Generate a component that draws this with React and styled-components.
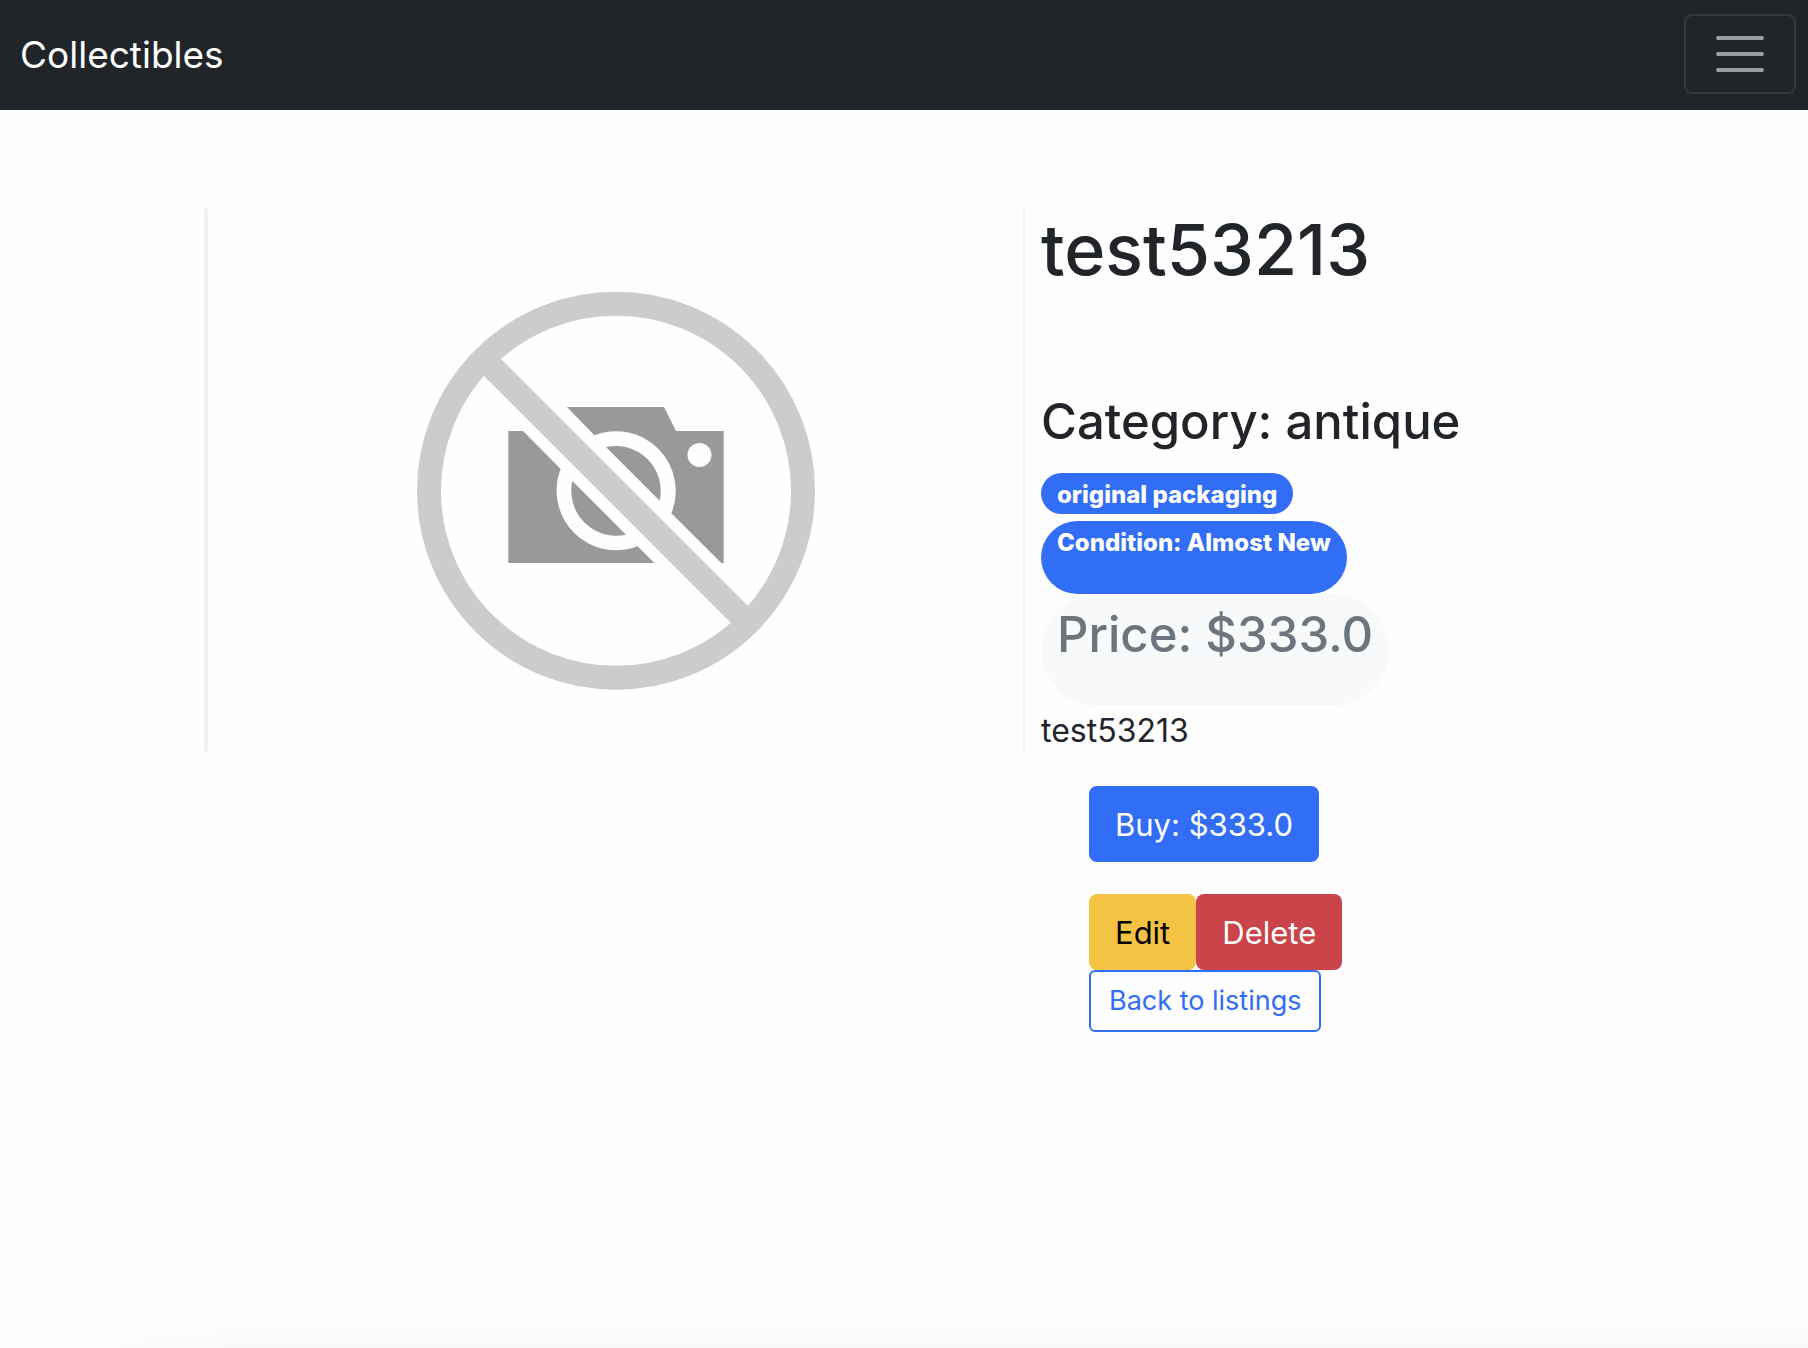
import React from "react";
import styled, { createGlobalStyle } from "styled-components";

const GlobalStyle = createGlobalStyle`
  *, *::before, *::after { box-sizing: border-box; }
  body {
    margin: 0;
    background: #fefefe;
    color: #212529;
    font-family: Inter, "Liberation Sans", sans-serif;
    font-size: 32px;
    line-height: 48px;
  }
  h1, h2, h3, p, figure { margin: 0; }
`;

const Page = styled.div`
  min-height: 100vh;
  display: flex;
  flex-direction: column;
`;

const Navbar = styled.nav`
  display: flex;
  align-items: center;
  justify-content: space-between;
  padding: 14px 12px 16px 20px;
  background: #212529;
`;

const Brand = styled.a`
  padding-top: 2px;
  color: #fff;
  font-size: 37px;
  line-height: 60px;
  text-decoration: none;
`;

const Toggler = styled.button`
  display: flex;
  align-items: center;
  justify-content: center;
  width: 112px;
  height: 80px;
  padding: 0;
  border: 2px solid #37393d;
  border-radius: 8px;
  background: transparent;
`;

const Listing = styled.main`
  display: grid;
  grid-template-columns: 821px 1fr;
  align-items: start;
  width: 100%;
  max-width: 1400px;
  margin: 0 auto;
  padding-top: 96px;
  flex: 1;
`;

const Photo = styled.figure`
  display: flex;
  justify-content: center;
  padding: 81px 0 59px;
  border: solid #fefefe;
  border-width: 4px 2px 4px 4px;
  border-left-color: #f0f0f0;
  border-right-color: #f0f0f0;
`;

const Details = styled.section`
  display: flex;
  flex-direction: column;
  align-items: flex-start;
  padding-left: 16px;
`;

const Title = styled.h1`
  font-size: 70px;
  font-weight: 500;
  line-height: 88px;
  margin-bottom: 96px;
`;

const Category = styled.h2`
  font-size: 49px;
  font-weight: 500;
  line-height: 64px;
  margin-bottom: 19px;
`;

const Badge = styled.span`
  padding: 9px 16px 7px;
  border-radius: 56px;
  background: #326df5;
  color: #fff;
  font-size: 24px;
  font-weight: 800;
  line-height: 25px;
  margin-bottom: 7px;
`;

const ConditionBadge = styled(Badge)`
  padding-bottom: 39px;
  margin-bottom: 0;
`;

const PriceBadge = styled(Badge)`
  padding: 15px 16px 45px;
  margin-bottom: 0;
  background: #f8f9fb;
  color: #6c757d;
  font-size: 49px;
  font-weight: 500;
  line-height: 52px;
`;

const Description = styled.p`
  padding: 1px 0 31px;
`;

const Actions = styled.div`
  display: flex;
  flex-direction: column;
  align-items: flex-start;
  padding-left: 48px;
`;

const ActionRow = styled.div`
  display: flex;
  margin-top: ${(p) => (p.$spaced ? "32px" : "0")};
`;

const tones = {
  primary: ["#326df5", "#fff"],
  warning: ["#f5c344", "#000"],
  danger: ["#ca444a", "#fff"],
};

const Button = styled.button`
  padding: 15px 26px 13px;
  border: 0;
  border-radius: 8px;
  background: ${(p) => tones[p.$tone][0]};
  color: ${(p) => tones[p.$tone][1]};
  font: inherit;
  font-size: 31px;
`;

const BackLink = styled.a`
  padding: 8px 18px;
  border: 2px solid #326df5;
  border-radius: 6px;
  color: #326df5;
  font-size: 27px;
  line-height: 42px;
  text-decoration: none;
`;

const BottomShade = styled.div`
  height: 28px;
  background: linear-gradient(to bottom, transparent, rgba(0, 0, 0, 0.025));
  mask-image: linear-gradient(to right, transparent 30px, #000 250px);
`;

function MenuIcon() {
  return (
    <svg width="48" height="36" viewBox="0 0 48 36" fill="none" stroke="#9b9c9f" strokeWidth="4" strokeLinecap="round" aria-hidden="true">
      <path d="M2 2H46M2 18H46M2 34H46" />
    </svg>
  );
}

function NoPhotoIcon() {
  return (
    <svg width="400" height="400" viewBox="47 63 1200 1200" role="img" aria-label="No photo available">
      <path
        fill="#999"
        d="M500 411H791L827 483H970V879H963L813 730A179 179 0 0 0 582 496ZM324 483H368L481 597A179 179 0 0 0 712 829L762 879H324Z"
      />
      <circle cx="897.500" cy="555" r="36" fill="#fefefe" />
      <path fill="#999" d="M617 531A135 135 0 0 1 778 692ZM516 633A135 135 0 0 0 677 794Z" />
      <circle cx="647" cy="662.500" r="561" fill="none" stroke="#ccc" strokeWidth="72" />
      <path fill="#ccc" d="M302 267L1043 1008L1010 1060L991 1058L251 318L262 280Z" />
    </svg>
  );
}

export default function App() {
  return (
    <>
      <GlobalStyle />
      <Page>
        <Navbar>
          <Brand href="#">Collectibles</Brand>
          <Toggler type="button" aria-label="Toggle navigation">
            <MenuIcon />
          </Toggler>
        </Navbar>
        <Listing>
          <Photo>
            <NoPhotoIcon />
          </Photo>
          <Details>
            <Title>test53213</Title>
            <Category>Category: antique</Category>
            <Badge>original packaging</Badge>
            <ConditionBadge>Condition: Almost New</ConditionBadge>
            <PriceBadge>Price: $333.0</PriceBadge>
            <Description>test53213</Description>
            <Actions>
              <Button type="button" $tone="primary">Buy: $333.0</Button>
              <ActionRow $spaced>
                <Button type="button" $tone="warning">Edit</Button>
                <Button type="button" $tone="danger">Delete</Button>
              </ActionRow>
              <BackLink href="#">Back to listings</BackLink>
            </Actions>
          </Details>
        </Listing>
        <BottomShade />
      </Page>
    </>
  );
}
